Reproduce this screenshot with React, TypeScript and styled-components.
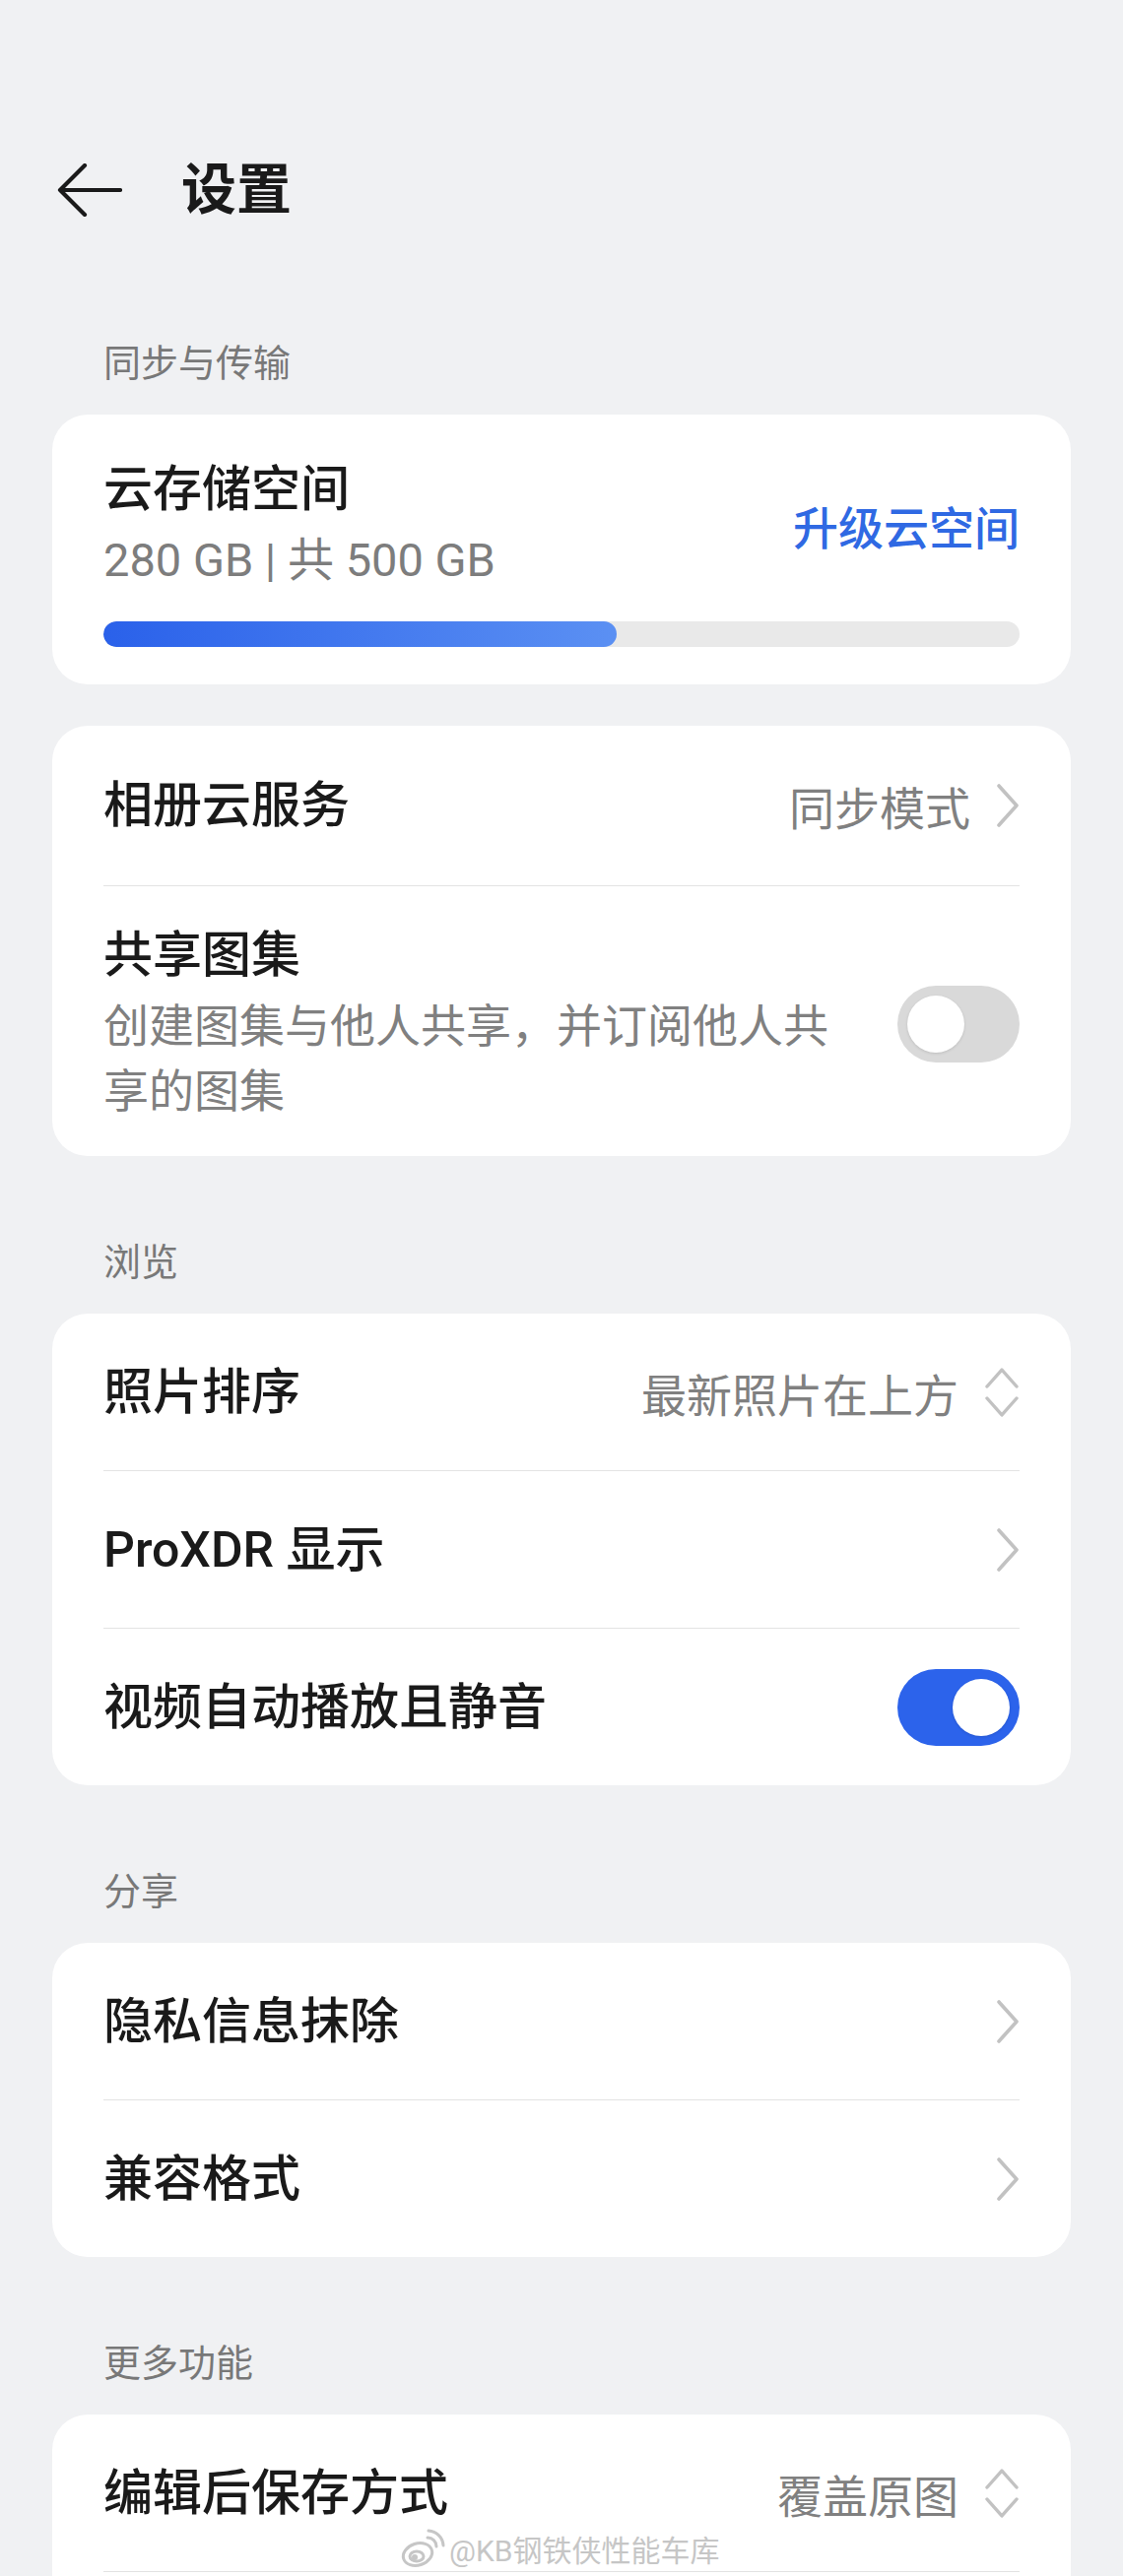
import styled, { createGlobalStyle } from "styled-components";

const GlobalStyle = createGlobalStyle`
  html, body {
    margin: 0;
    padding: 0;
    background: #f0f1f3;
  }
  body {
    font-family: Roboto, "Noto Sans CJK SC", sans-serif;
    color: #1a1a1a;
  }
`;

const Page = styled.div`
  position: relative;
  width: 1140px;
  min-height: 2616px;
  padding: 138px 53px 0;
  box-sizing: border-box;
  overflow: hidden;
`;

const Header = styled.header`
  display: flex;
  align-items: center;
  gap: 60px;
  height: 110px;
  margin: 0 0 85px 5px;
`;

const BackButton = styled.button`
  display: flex;
  padding: 0;
  border: 0;
  background: none;
`;

const PageTitle = styled.h1`
  margin: 0;
  font-size: 56px;
  font-weight: 600;
  line-height: 1;
`;

const SectionLabel = styled.div`
  height: 72px;
  line-height: 72px;
  margin: 72px 0 16px;
  padding-left: 52px;
  font-size: 38px;
  color: #787878;
`;

const Card = styled.section`
  background: #ffffff;
  border-radius: 36px;
  overflow: hidden;
`;

const StorageCard = styled(Card)`
  padding: 45px 52px 38px;
`;

const StorageTop = styled.div`
  display: flex;
  align-items: center;
  justify-content: space-between;
`;

const StorageTitle = styled.div`
  font-size: 50px;
  font-weight: 500;
  line-height: 62px;
`;

const StorageUsage = styled.div`
  margin-top: 10px;
  font-size: 47px;
  line-height: 62px;
  color: #7d7d7d;
`;

const UpgradeLink = styled.a`
  font-size: 46px;
  font-weight: 500;
  color: #2f69e3;
  text-decoration: none;
`;

const ProgressTrack = styled.div`
  margin-top: 31px;
  height: 26px;
  border-radius: 13px;
  background: #e9e9e9;
  overflow: hidden;
`;

const ProgressFill = styled.div`
  height: 100%;
  border-radius: 13px;
  background: linear-gradient(90deg, #2a61ea 0%, #5b90f3 100%);
`;

const Row = styled.div<{ $tall?: boolean; $height?: number }>`
  display: flex;
  align-items: center;
  justify-content: space-between;
  gap: 24px;
  box-sizing: border-box;
  min-height: ${(p) => p.$height ?? 159}px;
  padding: ${(p) => (p.$tall ? "39px 52px 33px" : "0 52px")};
`;

const RowText = styled.div`
  max-width: 760px;
`;

const RowTitle = styled.div`
  font-size: 50px;
  font-weight: 500;
  line-height: 62px;
`;

const RowSubtitle = styled.div`
  margin-top: 8px;
  font-size: 46px;
  line-height: 66px;
  color: #808080;
`;

const RowValue = styled.div`
  display: flex;
  align-items: center;
  gap: 26px;
  font-size: 46px;
  color: #808080;
  white-space: nowrap;
`;

const Divider = styled.div`
  height: 1px;
  margin: 0 52px;
  background: #e3e3e3;
`;

const Toggle = styled.div<{ $on?: boolean }>`
  display: flex;
  justify-content: ${(p) => (p.$on ? "flex-end" : "flex-start")};
  flex-shrink: 0;
  box-sizing: border-box;
  width: 124px;
  height: 78px;
  padding: 10px;
  border-radius: 39px;
  background: ${(p) => (p.$on ? "#2c63eb" : "#d9d9d9")};
`;

const Knob = styled.span`
  width: 58px;
  height: 58px;
  border-radius: 50%;
  background: #ffffff;
  box-shadow: 0 1px 3px rgba(0, 0, 0, 0.12);
`;

const Watermark = styled.div`
  position: absolute;
  top: 2566px;
  left: 406px;
  display: flex;
  align-items: center;
  gap: 4px;
  font-size: 30px;
  color: #c6c6c6;
  text-shadow: 0 0 2px #ffffff, 0 0 2px #ffffff;
`;

const BackArrow = () => (
  <svg width="66" height="54" viewBox="0 0 66 54" fill="none">
    <path
      d="M64 27H3M28 2L3 27l25 25"
      stroke="#1a1a1a"
      strokeWidth="4.2"
      strokeLinecap="round"
      strokeLinejoin="round"
    />
  </svg>
);

const Chevron = () => (
  <svg width="24" height="44" viewBox="0 0 24 44" fill="none">
    <path d="M3 2l18 20L3 42" stroke="#c2c2c2" strokeWidth="3.6" strokeLinecap="round" strokeLinejoin="round" />
  </svg>
);

const UpDown = () => (
  <svg width="36" height="52" viewBox="0 0 36 52" fill="none">
    <path
      d="M3 20L18 3l15 17M3 32l15 17 15-17"
      stroke="#c2c2c2"
      strokeWidth="3.4"
      strokeLinecap="round"
      strokeLinejoin="round"
    />
  </svg>
);

const WeiboLogo = () => (
  <svg width="46" height="40" viewBox="0 0 46 40" fill="none" stroke="#c6c6c6" strokeWidth="3">
    <ellipse cx="18" cy="26" rx="15" ry="11" transform="rotate(-18 18 26)" fill="#fff" />
    <ellipse cx="17" cy="28" rx="7" ry="5" />
    <circle cx="15" cy="29" r="1.5" fill="#c6c6c6" />
    <path d="M28 9a9 9 0 0 1 9 9" strokeLinecap="round" />
    <path d="M29 2a16 16 0 0 1 15 15" strokeLinecap="round" />
  </svg>
);

const used = 280;
const total = 500;

function App() {
  return (
    <Page>
      <GlobalStyle />
      <Header>
        <BackButton>
          <BackArrow />
        </BackButton>
        <PageTitle>设置</PageTitle>
      </Header>

      <SectionLabel>同步与传输</SectionLabel>
      <StorageCard>
        <StorageTop>
          <div>
            <StorageTitle>云存储空间</StorageTitle>
            <StorageUsage>
              {used} GB | 共 {total} GB
            </StorageUsage>
          </div>
          <UpgradeLink>升级云空间</UpgradeLink>
        </StorageTop>
        <ProgressTrack>
          <ProgressFill style={{ width: `${(used / total) * 100}%` }} />
        </ProgressTrack>
      </StorageCard>

      <Card style={{ marginTop: 42 }}>
        <Row $height={162}>
          <RowTitle>相册云服务</RowTitle>
          <RowValue>
            同步模式
            <Chevron />
          </RowValue>
        </Row>
        <Divider />
        <Row $tall>
          <RowText>
            <RowTitle>共享图集</RowTitle>
            <RowSubtitle>创建图集与他人共享，并订阅他人共享的图集</RowSubtitle>
          </RowText>
          <Toggle>
            <Knob />
          </Toggle>
        </Row>
      </Card>

      <SectionLabel>浏览</SectionLabel>
      <Card>
        <Row>
          <RowTitle>照片排序</RowTitle>
          <RowValue>
            最新照片在上方
            <UpDown />
          </RowValue>
        </Row>
        <Divider />
        <Row>
          <RowTitle>ProXDR 显示</RowTitle>
          <RowValue>
            <Chevron />
          </RowValue>
        </Row>
        <Divider />
        <Row>
          <RowTitle>视频自动播放且静音</RowTitle>
          <Toggle $on>
            <Knob />
          </Toggle>
        </Row>
      </Card>

      <SectionLabel>分享</SectionLabel>
      <Card>
        <Row>
          <RowTitle>隐私信息抹除</RowTitle>
          <RowValue>
            <Chevron />
          </RowValue>
        </Row>
        <Divider />
        <Row>
          <RowTitle>兼容格式</RowTitle>
          <RowValue>
            <Chevron />
          </RowValue>
        </Row>
      </Card>

      <SectionLabel>更多功能</SectionLabel>
      <Card>
        <Row>
          <RowTitle>编辑后保存方式</RowTitle>
          <RowValue>
            覆盖原图
            <UpDown />
          </RowValue>
        </Row>
        <Divider />
        <Row />
      </Card>

      <Watermark>
        <WeiboLogo />
        @KB钢铁侠性能车库
      </Watermark>
    </Page>
  );
}

export default App;
